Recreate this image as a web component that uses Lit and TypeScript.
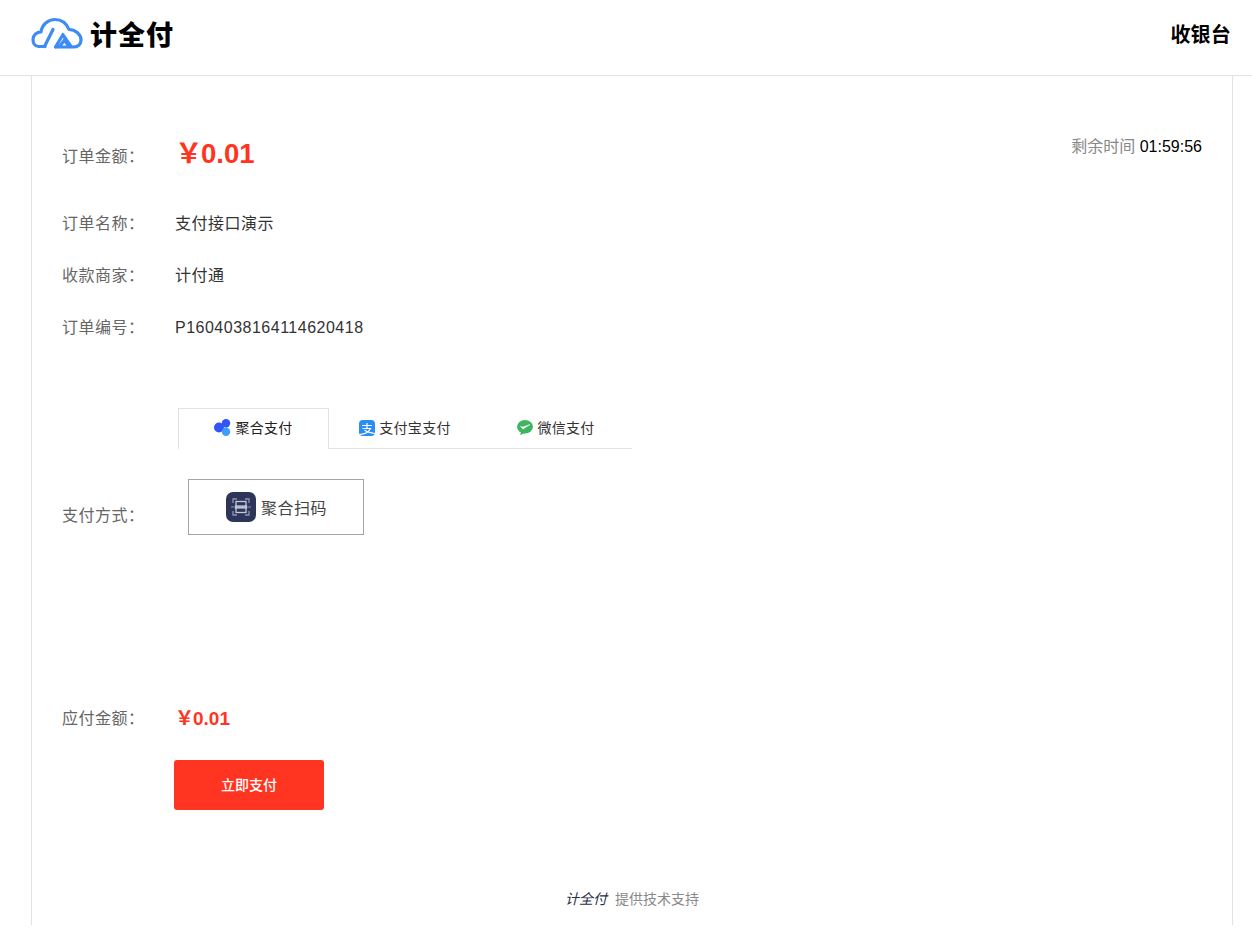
import { LitElement, html, css } from "lit";
import { customElement } from "lit/decorators.js";

@customElement("app-root")
export class AppRoot extends LitElement {
  static styles = css`
    :host { display: block; font-family: "Liberation Sans", "Noto Sans CJK SC", sans-serif; color: #333; height: 947px; background: #fff; }
    .header { height: 76px; box-sizing: border-box; border-bottom: 1px solid #e2e2e2; display: flex; align-items: center; justify-content: space-between; padding: 0 21px 8px 28px; }
    .logo { display: flex; align-items: center; gap: 2px; margin-top: 1px; }
    .logo-text { font-size: 27px; font-weight: 900; color: #000; letter-spacing: 1px; line-height: 34px; font-family: "Noto Sans CJK SC", sans-serif; }
    .cashier { font-size: 20px; font-weight: 700; color: #000; letter-spacing: .2px; margin-bottom: 1px; }
    .main { margin: 0 19px 0 31px; height: 849px; border-left: 1px solid #e2e2e2; border-right: 1px solid #e2e2e2; padding: 0 30px; display: flex; flex-direction: column; }
    .row { display: flex; align-items: center; font-size: 16px; letter-spacing: .5px; height: 24px; line-height: 24px; }
    .label { width: 113px; flex: none; color: #666; }
    .top { display: flex; justify-content: space-between; align-items: flex-start; margin-top: 62px; }
    .amount { font-size: 27.5px; font-weight: 700; color: #ff3522; line-height: 32px; letter-spacing: 0; }
    .yen { letter-spacing: -1.5px; }
    .amount-row { height: 32px; }
    .amount-row .label { padding-top: 6px; }
    .timer { font-size: 16px; color: #888; line-height: 20px; margin-top: -1px; }
    .timer span { color: #000; }
    .rows { display: flex; flex-direction: column; gap: 28px; margin-top: 42px; }
    .tabs { display: flex; margin: 68px 0 0 116px; width: 454px; border-bottom: 1px solid #e2e2e2; height: 40px; font-size: 14px; letter-spacing: .3px; }
    .tab { width: 151px; height: 40px; display: flex; align-items: center; justify-content: center; gap: 4px; color: #333; box-sizing: border-box; padding: 0 0 1px 1px; }
    .tab span { padding-bottom: 2px; }
    .tab.active { border: 1px solid #e2e2e2; border-bottom: 0; height: 41px; background: #fff; color: #222; padding: 0 0 3px; }
    .pay { display: flex; margin-top: 30px; align-items: flex-start; font-size: 16px; letter-spacing: .5px; }
    .pay .label { padding-top: 26px; line-height: 22px; }
    .method { margin-left: 13px; width: 176px; height: 56px; box-sizing: border-box; border: 1px solid #a5a5a5; display: flex; align-items: center; justify-content: center; gap: 5px; color: #444; font-size: 16px; letter-spacing: .5px; padding-left: 1px; }
    .due { margin-top: 171px; height: 26px; }
    .due-amt { font-size: 19px; font-weight: 700; color: #ff3522; letter-spacing: 0; }
    .due-amt .yen { letter-spacing: -1px; }
    .btn { margin: 28px 0 0 112px; width: 150px; height: 50px; box-sizing: border-box; padding-bottom: 2px; border-radius: 3px; background: #ff3522; color: #fff; font-size: 14px; font-weight: 500; display: flex; align-items: center; justify-content: center; }
    .footer { margin-top: 79px; text-align: center; font-size: 14px; color: #888; line-height: 20px; }
    .footer i { color: #2b2f45; margin-right: 8px; font-style: italic; }
    svg { display: block; flex: none; }
  `;

  render() {
    return html`
      <div class="header">
        <div class="logo">
          <svg width="60" height="40" viewBox="0 0 60 40" fill="none" stroke="#3b8cf6" stroke-width="3.200" stroke-linecap="round" stroke-linejoin="round">
            <path d="M17 32.500 H10.500 C7 32.500 5 29 5 25.500 C5 21 8.500 18 13 18 C14 10.500 20 5.500 27 5.500 C33.500 5.500 38.500 9.500 41 15.500 C47 15.500 53 20 53 26 C53 30.500 49.500 33 45.500 33 H28"/>
            <path d="M25 15.500 L16.500 32.500 M35 20.500 L27.500 33 M35 21 L43 32.500 M31.500 32.500 L36.500 26 L41 32.500"/>
          </svg>
          <div class="logo-text">计全付</div>
        </div>
        <div class="cashier">收银台</div>
      </div>
      <div class="main">
        <div class="top">
          <div class="row amount-row"><div class="label">订单金额：</div><div class="amount"><span class="yen">￥</span>0.01</div></div>
          <div class="timer">剩余时间 <span>01:59:56</span></div>
        </div>
        <div class="rows">
          <div class="row"><div class="label">订单名称：</div><div>支付接口演示</div></div>
          <div class="row"><div class="label">收款商家：</div><div>计付通</div></div>
          <div class="row"><div class="label">订单编号：</div><div>P1604038164114620418</div></div>
        </div>
        <div class="tabs">
          <div class="tab active">
            <svg width="17" height="17" viewBox="0 0 17 17"><circle cx="5" cy="8.500" r="5" fill="#3355f5"/><circle cx="12" cy="4.200" r="4.200" fill="#3355f5"/><circle cx="12" cy="12.800" r="4.200" fill="#3d9dfa"/></svg>
            <span>聚合支付</span>
          </div>
          <div class="tab">
            <svg width="16" height="16" viewBox="0 0 16 16"><rect width="16" height="16" rx="4" fill="#2a8cf5"/><path d="M3 5.500 H13 M8 3 V8 M3.500 8.500 H11.500 C10 12 6.500 14 0.500 14.500 M5.500 10 C8 12 12 13 16 13.500" stroke="#fff" stroke-width="1.200" fill="none"/></svg>
            <span>支付宝支付</span>
          </div>
          <div class="tab">
            <svg width="16" height="15" viewBox="0 0 16 15"><ellipse cx="8" cy="6.800" rx="8" ry="6.800" fill="#3fb55f"/><path d="M3 15 L4.500 10.500 L8 13 Z" fill="#3fb55f"/><path d="M3.500 6.500 L6 9 L13 4.500 L6.200 7 Z" fill="#fff" stroke="#fff" stroke-width=".5"/></svg>
            <span>微信支付</span>
          </div>
        </div>
        <div class="pay">
          <div class="label">支付方式：</div>
          <div class="method">
            <svg width="30" height="30" viewBox="0 0 30 30"><rect width="30" height="30" rx="7" fill="#2d3558"/><path d="M7 11 V7 H11 M19 7 H23 V11 M7 19 V23 H11 M19 23 H23 V19" stroke="#8e95b3" stroke-width="1.300" fill="none"/><rect x="10" y="9.500" width="10" height="11" fill="none" stroke="#c3c8da" stroke-width="1.300"/><rect x="9" y="13.500" width="12" height="3" fill="#e6e9f2"/><path d="M5 15 H25" stroke="#8e95b3" stroke-width="1"/></svg>
            <span>聚合扫码</span>
          </div>
        </div>
        <div class="row due"><div class="label">应付金额：</div><div class="due-amt"><span class="yen">￥</span>0.01</div></div>
        <div class="btn">立即支付</div>
        <div class="footer"><i>计全付</i>提供技术支持</div>
      </div>
    `;
  }
}
